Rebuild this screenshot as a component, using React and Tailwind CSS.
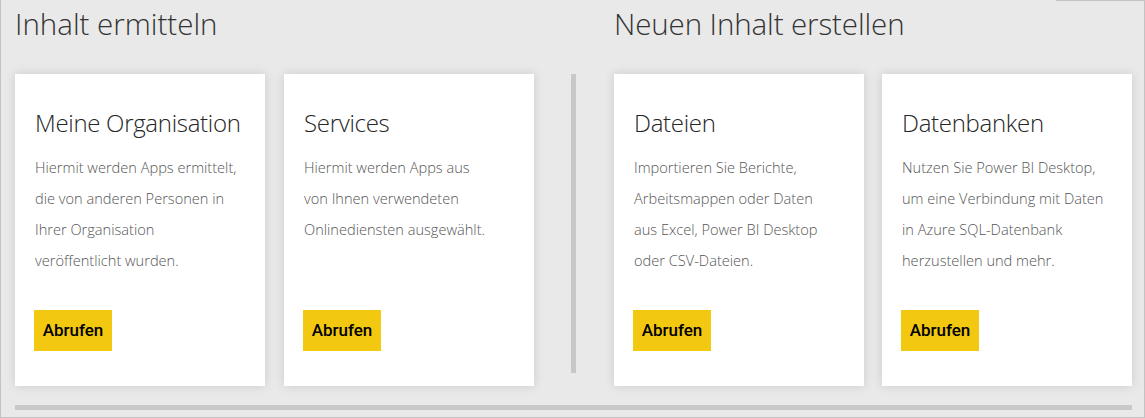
import React from "react";

const font = { fontFamily: '"Open Sans", "Noto Sans", sans-serif' };

function Card({ title, lines }) {
  return (
    <div className="w-[250px] h-[312px] bg-white shadow-[0_0_10px_rgba(0,0,0,0.13)] pl-5 pt-[32px] flex flex-col">
      <div className="text-[24px] leading-[34px] text-[#252525] font-light tracking-[-0.3px]">{title}</div>
      <div className="mt-[12px] text-[14.6px] leading-[31px] text-[#555555] font-light">
        {lines.map((l, i) => (
          <div key={i} className="whitespace-nowrap">{l}</div>
        ))}
      </div>
      <div className="flex-1" />
      <div className="mb-[35px]">
        <button
          className="h-[41px] w-[78px] bg-[#f2c811] text-[17px] text-black font-medium -ml-[1px] pt-px"
          style={{ fontFamily: 'Roboto, sans-serif' }}
        >
          Abrufen
        </button>
      </div>
    </div>
  );
}

export default function App() {
  return (
    <div
      className="relative w-[1145px] h-[418px] bg-[#e9e9e9] border-l border-r border-b border-[#c3c3c3] overflow-hidden"
      style={font}
    >
      <div className="absolute top-0 left-[1055px] right-0 h-px bg-[#c3c3c3]" />
      <div className="flex pl-[14px]">
        <div className="w-[519px]">
          <h1 className="h-[74px] pt-[4px] text-[29.5px] leading-[40px] text-[#333333] font-light">Inhalt ermitteln</h1>
          <div className="flex gap-[19px]">
            <Card
              title="Meine Organisation"
              lines={[
                "Hiermit werden Apps ermittelt,",
                "die von anderen Personen in",
                "Ihrer Organisation",
                "veröffentlicht wurden.",
              ]}
            />
            <Card
              title="Services"
              lines={[
                "Hiermit werden Apps aus",
                "von Ihnen verwendeten",
                "Onlinediensten ausgewählt.",
              ]}
            />
          </div>
        </div>
        <div className="ml-[37px] mt-[74px] w-[5px] h-[299px] bg-[#c8c8c8]" />
        <div className="ml-[38px]">
          <h1 className="h-[74px] pt-[4px] text-[29.5px] leading-[40px] text-[#333333] font-light tracking-[-0.1px]">Neuen Inhalt erstellen</h1>
          <div className="flex gap-[18px]">
            <Card
              title="Dateien"
              lines={[
                "Importieren Sie Berichte,",
                "Arbeitsmappen oder Daten",
                "aus Excel, Power BI Desktop",
                "oder CSV-Dateien.",
              ]}
            />
            <Card
              title="Datenbanken"
              lines={[
                "Nutzen Sie Power BI Desktop,",
                "um eine Verbindung mit Daten",
                "in Azure SQL-Datenbank",
                "herzustellen und mehr.",
              ]}
            />
          </div>
        </div>
      </div>
      <div className="ml-[14px] mt-[19px] w-[1117px] h-[5px] bg-[#c8c8c8]" />
    </div>
  );
}
